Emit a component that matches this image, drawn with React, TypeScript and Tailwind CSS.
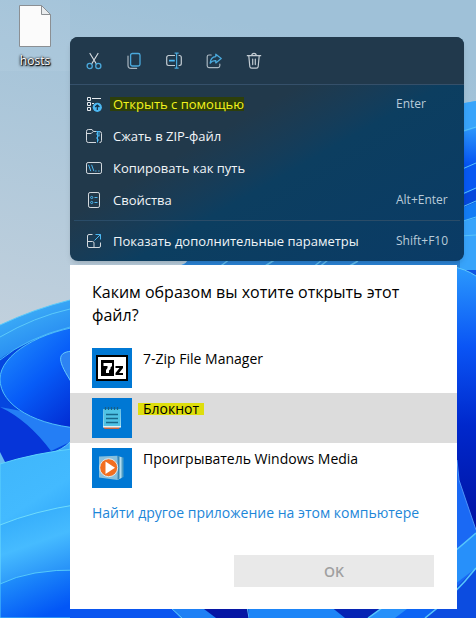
import { ReactNode } from 'react';

interface MenuItemProps {
  icon: ReactNode;
  label: string;
  shortcut?: string;
  highlighted?: boolean;
}

const MenuItem = ({ icon, label, shortcut, highlighted = false }: MenuItemProps) => {
  return (
    <button type="button" className="flex h-8 w-full items-center pl-4 text-left">
      <span className="mr-2 flex w-4 shrink-0 justify-center">{icon}</span>
      <span className="flex flex-1 whitespace-nowrap">
        <span
          className={`pl-[3px] text-[13px] ${
            highlighted ? 'bg-[#2d3f0a] leading-[14px] text-[#f4f41c]' : 'leading-4 text-[#f1f5f8]'
          }`}
        >
          {label}
        </span>
      </span>
      <span className="w-[68px] shrink-0 text-[12px] text-[#b9cbd9]">{shortcut}</span>
    </button>
  );
};

interface AppRowProps {
  icon: ReactNode;
  name: string;
  selected?: boolean;
}

const AppRow = ({ icon, name, selected = false }: AppRowProps) => {
  return (
    <button
      type="button"
      className={`flex w-full items-start py-[5px] pl-[22px] text-left ${selected ? 'bg-[#dcdcdc]' : ''}`}
    >
      <span className="flex size-10 shrink-0 items-center justify-center bg-[#0078d4]">{icon}</span>
      <span
        className={`ml-[6px] px-[5px] text-[14px] text-black ${
          selected ? 'mt-[5px] bg-[#dede0c] leading-3' : 'leading-[22px]'
        }`}
      >
        {name}
      </span>
    </button>
  );
};

const CutIcon = () => (
  <svg width="16" height="18" viewBox="0 0 16 18" fill="none">
    <path d="M4 1.5 10.4 12M12 1.5 5.6 12" stroke="#d3d9de" strokeWidth="1.2" strokeLinecap="round" />
    <circle cx="3.7" cy="14" r="2.6" stroke="#4aa9dc" strokeWidth="1.3" />
    <circle cx="12.3" cy="14" r="2.6" stroke="#4aa9dc" strokeWidth="1.3" />
  </svg>
);

const CopyIcon = () => (
  <svg width="16" height="18" viewBox="0 0 16 18" fill="none">
    <path d="M2 4v9.2a3.2 3.2 0 0 0 3.2 3.2h5.4" stroke="#a9b6c0" strokeWidth="1.2" strokeLinecap="round" />
    <rect x="4.6" y="1.5" width="9.4" height="12.5" rx="1.8" stroke="#4aa9dc" strokeWidth="1.3" />
  </svg>
);

const RenameIcon = () => (
  <svg width="16" height="18" viewBox="0 0 16 18" fill="none">
    <path
      d="M9 3.5H2.6A1.9 1.9 0 0 0 .7 5.4v6.2a1.9 1.9 0 0 0 1.9 1.9H9M12.6 3.5h.8a1.9 1.9 0 0 1 1.9 1.9v6.2a1.9 1.9 0 0 1-1.9 1.9h-.8"
      stroke="#c3ccd3"
      strokeWidth="1.2"
    />
    <path d="M8.6 1.2h4M8.6 16.2h4M10.6 1.2v15" stroke="#4aa9dc" strokeWidth="1.2" />
    <path d="M3 8.6h5.8" stroke="#4cb8f2" strokeWidth="1.8" />
  </svg>
);

const ShareIcon = () => (
  <svg width="16" height="18" viewBox="0 0 16 18" fill="none">
    <path
      d="M5.2 3H3a1.8 1.8 0 0 0-1.8 1.8v9A1.8 1.8 0 0 0 3 15.600h9a1.8 1.8 0 0 0 1.8-1.8V12"
      stroke="#a9b6c0"
      strokeWidth="1.2"
      strokeLinecap="round"
    />
    <path
      d="M9.8 2.2 15.2 6.6l-5.4 4.3V8.6C7.3 8.5 5.6 9.2 4.200 11.2 4.4 7.3 6.3 4.8 9.8 4.6Z"
      stroke="#4aa9dc"
      strokeWidth="1.3"
      strokeLinejoin="round"
    />
  </svg>
);

const DeleteIcon = () => (
  <svg width="16" height="18" viewBox="0 0 16 18" fill="none" stroke="#c3ccd3" strokeWidth="1.2" strokeLinecap="round">
    <path d="M1.3 3.7h13.4M5.800 3.5a2.2 2.2 0 0 1 4.4 0M2.8 3.9l1 10.6a1.900 1.900 0 0 0 1.900 1.700h4.600a1.900 1.900 0 0 0 1.900-1.700l1-10.600M6.700 7v5.600M9.300 7v5.600" />
  </svg>
);

const OpenWithIcon = () => (
  <svg width="16" height="16" viewBox="0 0 16 16" fill="none">
    <path d="M1.5 1.5h3v3h-3zM1.5 6.5h3v3h-3zM1.500 11.500h3v3h-3z" stroke="#e6ebef" />
    <path d="M6 2.500h9M6 7.500h2" stroke="#e6ebef" />
    <circle cx="11.300" cy="11.300" r="4.600" fill="#4cb8f2" />
    <path d="M11.300 14V9M9.200 11l2.100-2 2.100 2" stroke="#142c3f" strokeWidth="1.200" />
  </svg>
);

const ZipIcon = () => (
  <svg width="16" height="16" viewBox="0 0 16 16" fill="none">
    <path
      d="M10 3.500H7.500L6 1.500H2.300A1.800 1.800 0 0 0 .5 3.300v9.400a1.800 1.800 0 0 0 1.800 1.800H10M.5 5.500h4.700l2-2M13.500 3.500a2 2 0 0 1 2 2v7.200a1.800 1.800 0 0 1-2 1.800"
      stroke="#d3d9de"
    />
    <path d="M10 3.500h4M11.500 4v10.500M10 6h1.500M11.500 8h2M10 10h1.500M13 4v4M11.500 12h1.500" stroke="#4cb8f2" />
  </svg>
);

const CopyPathIcon = () => (
  <svg width="16" height="16" viewBox="0 0 16 16" fill="none">
    <rect x=".5" y="2.500" width="15" height="11" rx="1.600" stroke="#d3d9de" />
    <path d="m2.500 4.800 2.300 6.400M5.600 4.800l2.300 6.400M9.200 11h1.300M12.200 11h1.300" stroke="#4cb8f2" />
  </svg>
);

const PropertiesIcon = () => (
  <svg width="16" height="16" viewBox="0 0 16 16" fill="none">
    <rect x="2.500" y=".5" width="11" height="15" rx="1.600" stroke="#d3d9de" />
    <path d="M8.500 5.500h3M8.500 10.500h3" stroke="#4cb8f2" />
    <circle cx="5.700" cy="5.500" r="1.100" stroke="#4cb8f2" />
    <circle cx="5.700" cy="10.500" r="1.100" stroke="#4cb8f2" />
  </svg>
);

const MoreOptionsIcon = () => (
  <svg width="16" height="16" viewBox="0 0 16 16" fill="none">
    <path
      d="M6.500 1.500H3A1.500 1.500 0 0 0 1.500 3v10A1.500 1.500 0 0 0 3 14.500h10a1.500 1.500 0 0 0 1.500-1.500V9.500M1.500 8.500h5A1.500 1.500 0 0 1 8 10v4.500"
      stroke="#d3d9de"
    />
    <path d="M9.500 1.500h5v5M14.500 1.500l-6 6" stroke="#4cb8f2" />
  </svg>
);

const SevenZipIcon = () => (
  <svg width="32" height="26" viewBox="0 0 32 26">
    <path d="M0 0h32v26H0z" fill="#000" />
    <path d="M2 2h28v22H2z" fill="#fff" />
    <path d="M5 5h13v16H5z" fill="#000" />
    <path d="M7.500 8H16v3l-1.500 1.500V14L13 15.500V18h-3v-3l1.500-2v-2h-4z" fill="#fff" />
    <path d="M19.500 11H27v2l-4 5h4v2h-7.500v-2l4-5h-4z" fill="#000" />
  </svg>
);

const NotepadIcon = () => (
  <svg width="20" height="24" viewBox="0 0 20 24">
    <path d="M1.500 21h16.500l-1 2H2.500z" fill="#c8653c" />
    <path d="M1.500 3h17l.5 18.500H1z" fill="#e4f2f7" />
    <path d="M1.500 3h17V20H1.500z" fill="#50c3e4" />
    <path d="M4 8.500h12M4 12.500h12M4 16.500h12" stroke="#17688b" strokeWidth="1.400" />
    <path d="M3.500 1v3M6.500 1v3M9.500 1v3M12.500 1v3M15.500 1v3" stroke="#175f86" strokeWidth="1.300" />
  </svg>
);

const MediaPlayerIcon = () => (
  <svg width="28" height="26" viewBox="0 0 28 26">
    <path d="m20 1.500 5.500 1V22L19 25z" fill="#4e9dc6" />
    <path d="m20 1.500 3.500.5V23L19 25z" fill="#b2dced" />
    <path d="M20 1 21.500 1.500V23.500L19 25z" fill="#3b86b1" />
    <path d="M1 1.500 19.500.8V25L1 22.500z" fill="#87c0dd" />
    <circle cx="10.700" cy="12.700" r="9" fill="#f26f21" stroke="#dceaf2" />
    <path d="M7.500 6.500v12.500l9.500-6.300z" fill="#fff" />
  </svg>
);

const FileIcon = () => (
  <svg width="34" height="44" viewBox="0 0 34 44">
    <path d="M1.500 1.500h22l9 9v32h-31z" fill="#fbfbfb" stroke="#8b8f93" />
    <path d="M23.500 1.500v9h9z" fill="#e9ecee" stroke="#8b8f93" />
  </svg>
);

// Bloom wallpaper, scaled to cover the desktop
const Wallpaper = () => (
  <svg
    className="absolute inset-0 -z-10 h-full w-full"
    viewBox="0 0 476 618"
    preserveAspectRatio="xMidYMid slice"
    aria-hidden="true"
  >
    <defs>
      <linearGradient id="sky" x1="0.3" y1="0" x2="0.2" y2="0.6">
        <stop offset="0" stopColor="#9fc1d8" />
        <stop offset="1" stopColor="#c3d1dd" />
      </linearGradient>
      <linearGradient id="rim" gradientUnits="userSpaceOnUse" x1="20" y1="300" x2="50" y2="370">
        <stop offset="0" stopColor="#41b4f7" />
        <stop offset="0.6" stopColor="#2a90f3" />
        <stop offset="1" stopColor="#0e55e4" />
      </linearGradient>
      <linearGradient id="deep" gradientUnits="userSpaceOnUse" x1="10" y1="350" x2="80" y2="425">
        <stop offset="0" stopColor="#1a80fb" />
        <stop offset="0.4" stopColor="#075cf8" />
        <stop offset="1" stopColor="#0127cf" />
      </linearGradient>
      <linearGradient id="leaf" x1="0" y1="0" x2="0.3" y2="1">
        <stop offset="0" stopColor="#3fb6fa" />
        <stop offset="0.4" stopColor="#43baff" />
        <stop offset="1" stopColor="#148af4" />
      </linearGradient>
      <linearGradient id="lower-leaf" gradientUnits="userSpaceOnUse" x1="20" y1="515" x2="50" y2="600">
        <stop offset="0" stopColor="#36aefb" />
        <stop offset="0.35" stopColor="#46bbff" />
        <stop offset="1" stopColor="#1478f3" />
      </linearGradient>
      <linearGradient id="bottom" gradientUnits="userSpaceOnUse" x1="20" y1="572" x2="40" y2="618">
        <stop offset="0" stopColor="#2191fb" />
        <stop offset="1" stopColor="#0256f6" />
      </linearGradient>
      <linearGradient id="right" gradientUnits="userSpaceOnUse" x1="0" y1="268" x2="0" y2="530">
        <stop offset="0" stopColor="#2a98fd" />
        <stop offset="0.3" stopColor="#0a55f5" />
        <stop offset="0.6" stopColor="#0028cc" />
        <stop offset="1" stopColor="#0013a2" />
      </linearGradient>
      <linearGradient id="ridge" gradientUnits="userSpaceOnUse" x1="0" y1="130" x2="0" y2="165">
        <stop offset="0" stopColor="#2a93fb" />
        <stop offset="1" stopColor="#0553f2" />
      </linearGradient>
    </defs>
    <path d="M0 0h476v618H0z" fill="url(#sky)" />

    {/* outer petals */}
    <path d="M0 325Q34 309 70 300Q140 285 190 261Q320 130 464 103L476 101V618H0z" fill="url(#rim)" />
    <path d="M0 325Q34 309 70 300M0 337Q34 317 70 309" fill="none" stroke="#5ccafa" />
    <path d="M0 359Q22 342 70 328V460H0z" fill="#0546df" />
    <path d="M0 360Q26 338 70 327" fill="none" stroke="#49b9f8" />

    {/* inner bloom on the left */}
    <path d="M0 407Q28 420 51 451L0 464z" fill="#0635d9" />
    <path d="M0 407Q28 420 51 451L70 442V420z" fill="#247ef5" />
    <path d="M90 325C40 330 0 355 0 379C0 405 35 427 90 429z" fill="url(#deep)" stroke="#51bef9" />
    <path d="M80 351C55 350 57 359 70 380L80 400z" fill="#2d83f3" stroke="#67c9fa" />
    <path d="M0 452l6 12H0z" fill="#66baf3" />
    <path d="M51 453Q62 450 70 442V460z" fill="#3aa5f8" stroke="#62c8fb" />

    {/* lower petals */}
    <path d="M0 464Q34 453 80 448V618H0z" fill="url(#leaf)" stroke="#5ed2fb" />
    <path d="M0 525Q34 511 80 504V618H0z" fill="url(#lower-leaf)" stroke="#6fdcfb" />
    <path d="M0 584Q30 569 80 570L190 618H0z" fill="url(#bottom)" stroke="#55c9fb" />

    {/* petals between the menu and the dialog */}
    <path d="M188 260H476V270H180z" fill="#2b84d6" />
    <path d="M218 268l12-9M262 268l14-9M312 268l10-8M318 268l10-8M346 268l12-7" stroke="#63bff0" strokeWidth="1.500" />

    {/* right side */}
    <path d="M460 104 476 101V270H460z" fill="#38a4fb" />
    <path d="M460 133 476 128V164L460 170z" fill="url(#ridge)" />
    <path d="M460 170 476 163V190L460 196z" fill="#0758f2" />
    <path d="M460 196 476 189V203L460 209z" fill="#0648dc" />
    <path d="M460 209 476 202V218L460 222z" fill="#137cf5" />
    <path d="M460 132 476 127M460 170 476 163M460 195 476 188M460 208 476 201M460 222 476 217M460 236 476 235" stroke="#57c3fb" />
    <path d="M450 266Q466 269 476 276V560H450z" fill="url(#right)" />
    <path d="M450 266Q466 269 476 276" fill="none" stroke="#62cbfb" />
    <path d="M457 460 459 480 476 530V618H450V460z" fill="#1a69f4" />
    <path d="M457 460 459 480 476 530" fill="none" stroke="#4d92f7" />

    {/* bottom edge */}
    <path d="M70 606h406V618H70z" fill="#0a55ef" />
    <path d="M200 606h60V618H200z" fill="#0616a4" />
    <path d="M170 606 200 606 216 618H180z" fill="#1e80f5" />
    <path d="M171 608 182 618M247 606 249 618" stroke="#5dc6fa" />
    <path d="M248 606H340L350 618H249z" fill="#1d85f7" />
    <path d="M330 606H385L368 618H345z" fill="#0624b4" />
    <path d="M368 618Q425 578 476 533V568Q440 595 415 618z" fill="#2790fa" />
    <path d="M395 618 411 606H440L425 618z" fill="#0c64f4" />
    <path d="M425 618 476 568V618z" fill="#0c4ce0" />
    <path d="M368 618Q425 578 476 533M425 618Q455 595 476 568" fill="none" stroke="#57c6fb" strokeWidth="1.500" />
  </svg>
);

const App = () => {
  return (
    <main className="relative isolate flex min-h-screen items-start overflow-hidden font-['Open_Sans','Noto_Sans',sans-serif]">
      <Wallpaper />

      <div className="w-[70px] shrink-0 bg-white/5 pt-1 pb-[2px]">
        <button type="button" className="flex w-full flex-col items-center">
          <FileIcon />
          <span className="mt-[5px] text-[12px] leading-4 text-white [text-shadow:1px_1px_1px_#000,0_0_2px_#000,0_1px_3px_#000]">
            hosts
          </span>
        </button>
      </div>

      <div className="min-w-0 flex-1 pt-[37px] pr-3 pb-[9px]">
        {/* Context menu */}
        <nav
          aria-label="Контекстное меню"
          className="overflow-hidden rounded-lg bg-linear-to-br from-[#21394b] from-40% via-[#0c3e60] via-58% to-[#0a3b66] shadow-md"
        >
          <div className="flex h-12 items-center gap-6 border-b border-[#35506a] bg-[#21394c] pl-4">
            <button type="button" aria-label="Вырезать"><CutIcon /></button>
            <button type="button" aria-label="Копировать"><CopyIcon /></button>
            <button type="button" aria-label="Переименовать"><RenameIcon /></button>
            <button type="button" aria-label="Поделиться"><ShareIcon /></button>
            <button type="button" aria-label="Удалить"><DeleteIcon /></button>
          </div>
          <div className="pt-[3px] pb-1">
            <MenuItem icon={<OpenWithIcon />} label="Открыть с помощью" shortcut="Enter" highlighted />
            <MenuItem icon={<ZipIcon />} label="Сжать в ZIP-файл" />
            <MenuItem icon={<CopyPathIcon />} label="Копировать как путь" />
            <MenuItem icon={<PropertiesIcon />} label="Свойства" shortcut="Alt+Enter" />
            <hr className="mx-1 my-1 border-[#2a4c68]" />
            <MenuItem icon={<MoreOptionsIcon />} label="Показать дополнительные параметры" shortcut="Shift+F10" />
          </div>
        </nav>

        {/* Open-with dialog */}
        <section aria-labelledby="dialog-title" className="mt-1 mr-[7px] bg-white pt-4 pb-[22px]">
          <h1 id="dialog-title" className="mb-4 px-[22px] text-[16px] leading-[23px] text-black">
            Каким образом вы хотите открыть этот файл?
          </h1>
          <AppRow icon={<SevenZipIcon />} name="7-Zip File Manager" />
          <AppRow icon={<NotepadIcon />} name="Блокнот" selected />
          <AppRow icon={<MediaPlayerIcon />} name="Проигрыватель Windows Media" />
          <a href="#" className="mt-[9px] block pl-[22px] text-[14px] leading-[22px] whitespace-nowrap text-[#1c86d8]">
            Найти другое приложение на этом компьютере
          </a>
          <div className="mt-[31px] flex justify-end pr-[23px]">
            <button type="button" disabled className="h-8 w-[200px] bg-[#e9e9e9] text-[14px] font-semibold text-[#a0a0a0]">
              OK
            </button>
          </div>
        </section>
      </div>
    </main>
  );
};

export default App;
